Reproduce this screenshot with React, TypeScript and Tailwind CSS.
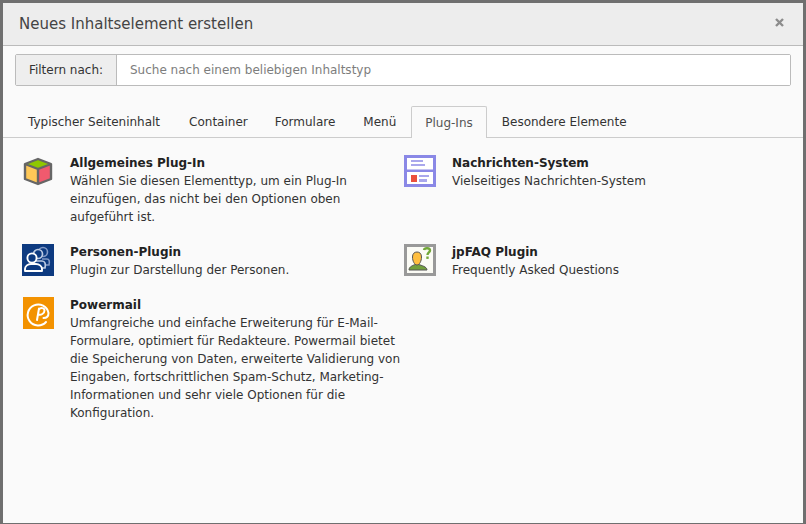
const tabs = [
  { label: "Typischer Seiteninhalt", cls: "pl-[14px] pr-[15px]" },
  { label: "Container", cls: "pl-[14px] pr-[13px]" },
  { label: "Formulare", cls: "px-[14px]" },
  { label: "Menü", cls: "pl-[14px] pr-[15px]" },
];

function CubeIcon() {
  return (
    <svg width="32" height="32" viewBox="0 0 32 32" className="block">
      <path d="M16 4 L29 9 L16 14 L3 9 Z" fill="#8fc800" />
      <path d="M3 9 L16 14 L16 29 L3 24 Z" fill="#ffc857" />
      <path d="M29 9 L16 14 L16 29 L29 24 Z" fill="#f05a6e" />
      <path d="M16 4 L29 9 L29 24 L16 29 L3 24 L3 9 Z M3 9 L16 14 L29 9 M16 14 L16 29" fill="none" stroke="#666" strokeWidth="2.4" strokeLinejoin="round" />
    </svg>
  );
}

function PersonIcon() {
  return (
    <svg width="32" height="32" viewBox="0 0 32 32" className="block">
      <rect width="32" height="32" fill="#0d3a80" />
      <g fill="none" stroke="#8199c6" strokeWidth="1.6">
        <circle cx="21" cy="8" r="4.5" />
        <path d="M20 15 L25 15 C27 15 28 17 27 21 L22 21" />
      </g>
      <g fill="#0d3a80" stroke="#bccae2" strokeWidth="1.7">
        <circle cx="16" cy="10" r="4.5" />
        <path d="M14 17 L20 17 C23 17 24 20 23 24 L16 24" />
      </g>
      <g fill="#0d3a80" stroke="#fff" strokeWidth="1.9">
        <circle cx="10" cy="14" r="4.6" />
        <path d="M3 27 L3 25 C3 22 6 20 9 20 L14 20 C17 20 20 22 20 25 L20 27 Z" strokeLinejoin="round" />
      </g>
    </svg>
  );
}

function PowermailIcon() {
  return (
    <svg width="31" height="32" viewBox="0 0 31 32" className="block">
      <rect width="31" height="32" fill="#f39200" />
      <path d="M23 25 A 10.5 10.5 0 1 1 25.5 16 C25.5 19 23.5 21 20.5 21" fill="none" stroke="#fff" strokeWidth="2" strokeLinecap="round" />
      <path d="M14 23 L16 11.5 M16 12.5 C17.5 10.5 21.5 10.5 21.5 13.5 C21.5 16.5 18 18.5 15 17.5" fill="none" stroke="#fff" strokeWidth="2" strokeLinecap="round" />
    </svg>
  );
}

function NewsIcon() {
  return (
    <svg width="32" height="32" viewBox="0 0 32 32" className="block">
      <rect x="1.5" y="1.5" width="29" height="29" fill="#fff" stroke="#8a88e6" strokeWidth="3" />
      <rect x="1" y="14.5" width="30" height="2.5" fill="#8a88e6" />
      <rect x="7" y="5" width="12" height="2" fill="#a9a7ec" />
      <rect x="7" y="9" width="14" height="2" fill="#a9a7ec" />
      <rect x="7" y="20" width="6" height="7" fill="#ea4f3d" />
      <rect x="15" y="20" width="10" height="2" fill="#a9a7ec" />
      <rect x="15" y="24" width="8" height="3" fill="#a9a7ec" />
    </svg>
  );
}

function FaqIcon() {
  return (
    <svg width="32" height="32" viewBox="0 0 32 32" className="block">
      <rect x="1.5" y="1.5" width="29" height="29" fill="#fbfbf5" stroke="#999" strokeWidth="3" />
      <path d="M5 26 C5 22.5 9 21.5 11 20.5 L15 20.5 C17 21.5 23 22.5 23 26 Z" fill="#72a03c" stroke="#555" strokeWidth="1" />
      <path d="M8.5 13 C8.5 9.5 10.5 8 13 8 C15.5 8 17.5 9.5 17.5 13 C17.5 17 15.5 21 13 21 C10.5 21 8.5 17 8.5 13 Z" fill="#ffbf3f" stroke="#555" strokeWidth="1" />
      <path d="M20 6 C20.5 3.5 26 3.5 26 6.5 C26 8.5 23.5 8.5 23.5 11" fill="none" stroke="#72a83a" strokeWidth="2.4" />
      <rect x="22.3" y="12.5" width="2.4" height="2.4" fill="#72a83a" />
    </svg>
  );
}

function Item({ icon, title, children }: { icon: React.ReactNode; title: string; children: React.ReactNode }) {
  return (
    <div className="flex">
      <div className="w-[48px] shrink-0 pt-[1px]">{icon}</div>
      <div className="w-[334px] text-[12px] leading-[18px]">
        <div className="font-bold text-[#222]">{title}</div>
        <div>{children}</div>
      </div>
    </div>
  );
}

export default function App() {
  return (
    <div className="h-[524px] w-[806px] overflow-hidden bg-[#6f6f6f] p-[3px] text-[#333] [font-family:'DejaVu_Sans',Verdana,sans-serif]">
      <div className="flex h-[520px] w-[800px] flex-col bg-[#fafafa]">
        {/* header */}
        <div className="flex h-[43px] shrink-0 items-center justify-between border-b border-[#bbb] bg-[#ededed] pl-4 pr-[19px]">
          <h1 className="text-[15px] font-normal text-[#444]">Neues Inhaltselement erstellen</h1>
          <svg width="9" height="9" viewBox="0 0 9 9" className="mb-[3px]">
            <path d="M1 1 L8 8 M8 1 L1 8" stroke="#8c8c8c" strokeWidth="2.4" />
          </svg>
        </div>

        {/* filter */}
        <div className="mx-3 mt-[8px] flex h-[32px] shrink-0 rounded-[2px] border border-[#bbb] text-[12px]">
          <div className="flex w-[101px] shrink-0 items-center justify-center border-r border-[#bbb] bg-[#eee] text-[#333]">Filtern nach:</div>
          <div className="flex flex-1 items-center bg-white pl-[13px] text-[#7d7d7d]">Suche nach einem beliebigen Inhaltstyp</div>
        </div>

        {/* tabs */}
        <div className="mt-[20px] flex h-[32px] shrink-0 border-b border-[#ccc] pl-[11px] text-[12px]">
          {tabs.map((t) => (
            <div key={t.label} className={`flex h-[31px] items-center text-[#333] ${t.cls}`}>{t.label}</div>
          ))}
          <div className="-mb-px flex h-[32px] items-center rounded-t-[2px] border border-b-0 border-[#ccc] bg-[#fafafa] px-[13px] text-[#555]">Plug-Ins</div>
          <div className="flex h-[31px] items-center pl-[15px] pr-[14px] text-[#333]">Besondere Elemente</div>
        </div>

        {/* plugin list */}
        <div className="grid grid-cols-[382px_382px] gap-y-[17px] pl-[19px] pt-[16px]">
          <Item icon={<CubeIcon />} title="Allgemeines Plug-In">
            Wählen Sie diesen Elementtyp, um ein Plug-In einzufügen, das nicht bei den Optionen oben aufgeführt ist.
          </Item>
          <Item icon={<NewsIcon />} title="Nachrichten-System">
            Vielseitiges Nachrichten-System
          </Item>
          <Item icon={<PersonIcon />} title="Personen-Plugin">
            Plugin zur Darstellung der Personen.
          </Item>
          <Item icon={<FaqIcon />} title="jpFAQ Plugin">
            Frequently Asked Questions
          </Item>
          <Item icon={<div className="ml-px"><PowermailIcon /></div>} title="Powermail">
            Umfangreiche und einfache Erweiterung für E-Mail-Formulare, optimiert für Redakteure. Powermail bietet die Speicherung von Daten, erweiterte Validierung von Eingaben, fortschrittlichen Spam-Schutz, Marketing-Informationen und sehr viele Optionen für die Konfiguration.
          </Item>
        </div>
      </div>
    </div>
  );
}
